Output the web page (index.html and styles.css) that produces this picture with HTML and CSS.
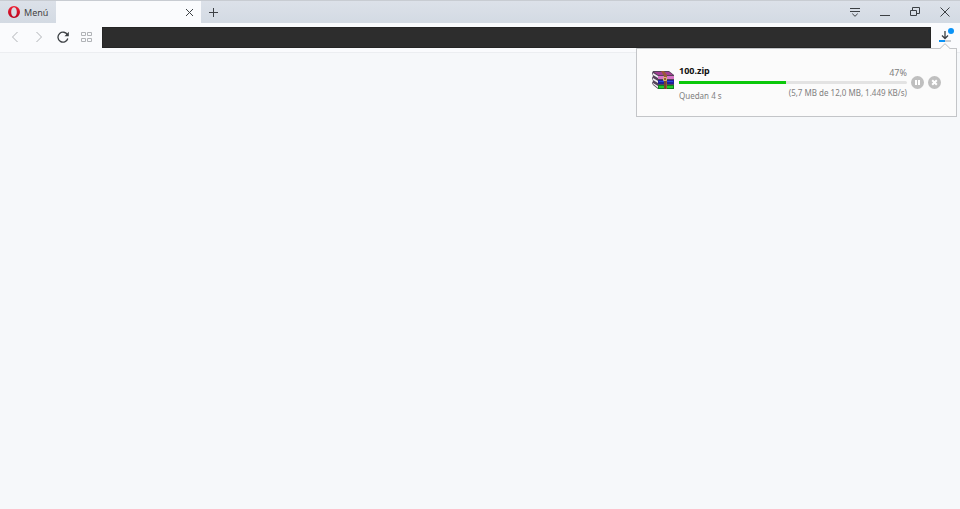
FILE: index.html
```html
<!DOCTYPE html>
<html lang="es">
<head>
    <meta charset="UTF-8">
    <meta name="viewport" content="width=device-width, initial-scale=1.0">
    <title>Opera</title>
    <link rel="stylesheet" href="styles.css">
</head>
<body>
    <!-- Pestañas -->
    <header class="tab-bar">
        <button class="menu-button">
            <svg width="12" height="12" viewBox="0 0 12 12">
                <defs>
                    <linearGradient id="rojo" x1="0" y1="0" x2="0" y2="1">
                        <stop offset="0" stop-color="#f02436"/>
                        <stop offset="1" stop-color="#b8001c"/>
                    </linearGradient>
                </defs>
                <path fill="url(#rojo)" fill-rule="evenodd" d="M6 0a6 6 0 1 0 0 12A6 6 0 1 0 6 0zM6 1.300C7.900 1.300 8.800 3.500 8.800 6S7.900 10.700 6 10.700 3.200 8.500 3.200 6 4.100 1.300 6 1.300z"/>
            </svg>
            Menú
        </button>
        <div class="tab">
            <button class="icon-button" aria-label="Cerrar pestaña">
                <svg width="9" height="9" viewBox="0 0 9 9"><path d="M1 1l7 7M8 1l-7 7"/></svg>
            </button>
        </div>
        <button class="icon-button new-tab" aria-label="Nueva pestaña">
            <svg width="9" height="9" viewBox="0 0 9 9"><path d="M4.500 0v9M0 4.500h9"/></svg>
        </button>
        <div class="window-buttons">
            <button class="icon-button" aria-label="Pestañas">
                <svg width="10" height="10" viewBox="0 0 10 10"><path d="M0 1.500h10M0 4.500h10M2.300 6.700L5 9.300l2.700-2.600"/></svg>
            </button>
            <button class="icon-button" aria-label="Minimizar">
                <svg width="10" height="10" viewBox="0 0 10 10"><path d="M0 8.500h10"/></svg>
            </button>
            <button class="icon-button" aria-label="Restaurar">
                <svg width="10" height="10" viewBox="0 0 10 10"><path d="M0.500 3.500h6v5h-6zM2.500 3V0.500h7v6H7"/></svg>
            </button>
            <button class="icon-button" aria-label="Cerrar">
                <svg width="10" height="10" viewBox="0 0 10 10"><path d="M0.500 0.500l9 9M9.500 0.500l-9 9"/></svg>
            </button>
        </div>
    </header>

    <!-- Barra de direcciones -->
    <nav class="toolbar">
        <button class="icon-button light" aria-label="Atrás">
            <svg width="12" height="12" viewBox="0 0 12 12"><path d="M8.500 1l-5 5 5 5"/></svg>
        </button>
        <button class="icon-button light" aria-label="Adelante">
            <svg width="12" height="12" viewBox="0 0 12 12"><path d="M3.500 1l5 5-5 5"/></svg>
        </button>
        <button class="icon-button" aria-label="Recargar">
            <svg width="12" height="12" viewBox="0 0 12 12"><path class="reload" d="M10.500 4A5 5 0 1 0 10.800 7.500"/><path class="solid" d="M11.800 0.800v4.500H7.500z"/></svg>
        </button>
        <button class="icon-button light" aria-label="Acceso rápido">
            <svg width="12" height="12" viewBox="0 0 12 12"><path d="M0.500 1.500h4v3h-4zM6.500 1.500h4v3h-4zM0.500 7.500h4v3h-4zM6.500 7.500h4v3h-4z"/></svg>
        </button>
        <input class="address" type="text" aria-label="Dirección">
        <button class="icon-button downloads" aria-label="Descargas">
            <svg width="18" height="18" viewBox="0 0 18 18">
                <path class="down" d="M8 3v7.500M5 7.500l3 3 3-3"/>
                <path class="track" d="M2 13h12"/>
                <path class="active" d="M2 13h6"/>
                <circle class="dot" cx="14" cy="3" r="3"/>
            </svg>
        </button>
        <!-- Descarga en curso -->
        <section class="popup">
            <svg class="arrow" width="12" height="6" viewBox="0 0 12 6"><path d="M0.500 6L6 0.700 11.500 6"/></svg>
            <svg class="archive" width="22" height="18" viewBox="0 0 22 18">
                <path fill="#54445a" d="M1 0h16l5 4v14H6l-5-4-1-2 1-2-1-3 1-2-1-3z"/>
                <path fill="#f2eff3" d="M1 2l5 3v2L1 4zM1 7l5 3v2L1 9zM1 12l5 3v2l-5-4z"/>
                <path fill="#a33f94" d="M2 1h15l4 3H6z"/>
                <path fill="#d874c8" d="M6 5h16v3H6z"/>
                <path fill="#202098" d="M6 9h16v4H6z"/>
                <path fill="#2848e0" d="M7 10h14v1H7z"/>
                <path fill="#108020" d="M6 14h16v4H6z"/>
                <path fill="#20cc28" d="M7 15h14v2H7z"/>
                <path fill="#9a5838" d="M9 0h3l3 4v14h-3V5z"/>
                <path fill="none" stroke="#d8b878" d="M11.500 6.500h3v3h-3z"/>
                <path fill="none" stroke="#503028" d="M13 10v8"/>
            </svg>
            <div class="info">
                <div class="row">
                    <strong class="file-name">100.zip</strong>
                    <span class="percent">47%</span>
                </div>
                <progress value="47" max="100" aria-label="100.zip"></progress>
                <div class="row">
                    <span class="remaining">Quedan 4 s</span>
                    <span>(5,7 MB de 12,0 MB, 1.449 KB/s)</span>
                </div>
            </div>
            <button class="round-button" aria-label="Pausar">
                <svg width="13" height="13" viewBox="0 0 13 13"><path d="M5 4v5M8 4v5"/></svg>
            </button>
            <button class="round-button" aria-label="Cancelar">
                <svg width="13" height="13" viewBox="0 0 13 13"><path d="M4.200 4.200l4.600 4.600M8.800 4.200L4.200 8.800"/></svg>
            </button>
        </section>
    </nav>
    <main></main>
</body>
</html>
```
FILE: styles.css
```css
* { box-sizing: border-box; }
body { margin: 0; min-height: 100vh; background-color: #f6f8fa; color: #444; font-family: "Noto Sans", "Open Sans", sans-serif; font-size: 8px; }
button { font: inherit; color: inherit; border: none; background: none; padding: 0; cursor: pointer; }
svg { display: block; fill: none; stroke: #3c4044; }

.tab-bar { display: flex; height: 23px; background: linear-gradient(#dce1e9, #d3dae3); border-top: 1px solid #c8ccd2; }
.menu-button { display: flex; align-items: center; gap: 4px; width: 56px; padding-left: 8px; font-size: 9px; }
.menu-button svg { stroke: none; }
.tab { display: flex; justify-content: flex-end; width: 145px; background-color: #fafbfd; }
.icon-button { display: flex; align-items: center; justify-content: center; width: 24px; }
.window-buttons { display: flex; margin-left: auto; }
.window-buttons .icon-button { width: 30px; }

.toolbar { position: relative; display: flex; align-items: center; height: 30px; padding: 0 0 2px 3px; background-color: #fafbfd; border-bottom: 1px solid #eceef1; }
.light svg { stroke: #b0b3b7; }
.reload, .down { stroke-width: 1.3; }
.solid { fill: #3c4044; stroke: none; }
.address { flex: 1; min-width: 0; height: 21px; margin: 2px 0 0 3px; padding: 0 8px; border: 1px solid #252525; background-color: #2d2d2d; color: #eee; }
.downloads { width: 29px; }
.track { stroke: #c9ccd0; stroke-width: 2; }
.active { stroke: #0b93f6; stroke-width: 2; }
.dot { fill: #0b93f6; stroke: none; }

.popup { position: absolute; top: 25px; right: 3px; display: flex; align-items: center; width: 321px; height: 69px; padding: 0 15px; background-color: #fbfbfb; border: 1px solid #c3c5c8; color: #808080; }
.arrow { position: absolute; top: -6px; right: 5px; fill: #fbfbfb; stroke: #b9bbbe; }
.archive { margin: 0 5px 6px 0; stroke: none; }
.info { flex: 1; padding-top: 2px; }
.row { display: flex; justify-content: space-between; line-height: 12px; }
.file-name { color: #111; font-size: 9px; }
.percent { font-size: 9px; padding-top: 2px; }
.remaining { padding-top: 3px; }
progress { display: block; width: 100%; height: 3px; margin: 2px 0 3px; border: none; appearance: none; }
progress::-webkit-progress-bar { background-color: #e3e3e3; border-radius: 2px; }
progress::-webkit-progress-value { background-color: #0bc80b; }
.round-button { width: 13px; height: 13px; margin-left: 4px; border-radius: 50%; background-color: #bfbfbf; }
.round-button svg { stroke: #fff; stroke-width: 2; }
```
